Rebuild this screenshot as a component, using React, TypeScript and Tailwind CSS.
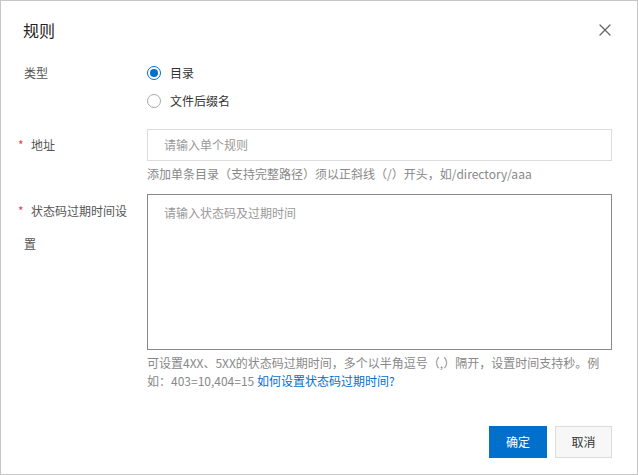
import { X } from "lucide-react";

const font = { fontFamily: '"Noto Sans CJK SC", "Liberation Sans", sans-serif' };

export default function App() {
  return (
    <div style={font} className="w-[638px] h-[475px] border border-[#c6c6c6] bg-white text-[12px] text-[#333] relative">
      <div className="flex items-center justify-between pl-[22px] pr-[22px] pt-[17px]">
        <div className="text-[16px] text-[#222] leading-[24px]">规则</div>
        <X className="w-5 h-5 text-[#666]" strokeWidth={1.5} />
      </div>
      <div className="pl-[23px] pr-[25px] mt-[21px]">
        <div className="flex">
          <div className="w-[123px] leading-[20px] text-[#555]">类型</div>
          <div className="flex flex-col gap-[8px]">
            <label className="flex items-center gap-[9px] leading-[20px]">
              <span className="w-[14px] h-[14px] rounded-full border border-[#0070cc] flex items-center justify-center">
                <span className="w-[8px] h-[8px] rounded-full bg-[#0070cc]" />
              </span>
              目录
            </label>
            <label className="flex items-center gap-[9px] leading-[20px]">
              <span className="w-[14px] h-[14px] rounded-full border border-[#aaa]" />
              文件后缀名
            </label>
          </div>
        </div>
        <div className="flex mt-[18px]">
          <div className="w-[123px] leading-[32px] text-[#555] relative">
            <span className="absolute -left-[6px] text-[#e54545]">*</span>
            <span className="ml-[7px]">地址</span>
          </div>
          <div className="flex-1">
            <div className="h-[32px] border border-[#dcdcdc] px-[16px] leading-[30px] text-[#999]">请输入单个规则</div>
            <div className="text-[#888] leading-[18px] mt-[4px]">添加单条目录（支持完整路径）须以正斜线（/）开头，如/directory/aaa</div>
          </div>
        </div>
        <div className="flex mt-[11px]">
          <div className="w-[123px] leading-[33px] text-[#555] relative pr-[16px]">
            <span className="absolute -left-[6px] text-[#e54545]">*</span>
            <span className="ml-[7px]">状态码过期时间设置</span>
          </div>
          <div className="flex-1">
            <div className="h-[156px] border border-[#888] px-[16px] pt-[9px] text-[#999]">请输入状态码及过期时间</div>
            <div className="text-[#888] leading-[18px] mt-[4px]">
              可设置4XX、5XX的状态码过期时间，多个以半角逗号（,）隔开，设置时间支持秒。例如：403=10,404=15 <span className="text-[#0070cc]">如何设置状态码过期时间?</span>
            </div>
          </div>
        </div>
        <div className="flex justify-end gap-[8px] mt-[36px]">
          <button className="w-[58px] h-[32px] bg-[#0070cc] text-white">确定</button>
          <button className="w-[57px] h-[32px] bg-[#f7f7f7] border border-[#dcdcdc] text-[#333]">取消</button>
        </div>
      </div>
    </div>
  );
}
